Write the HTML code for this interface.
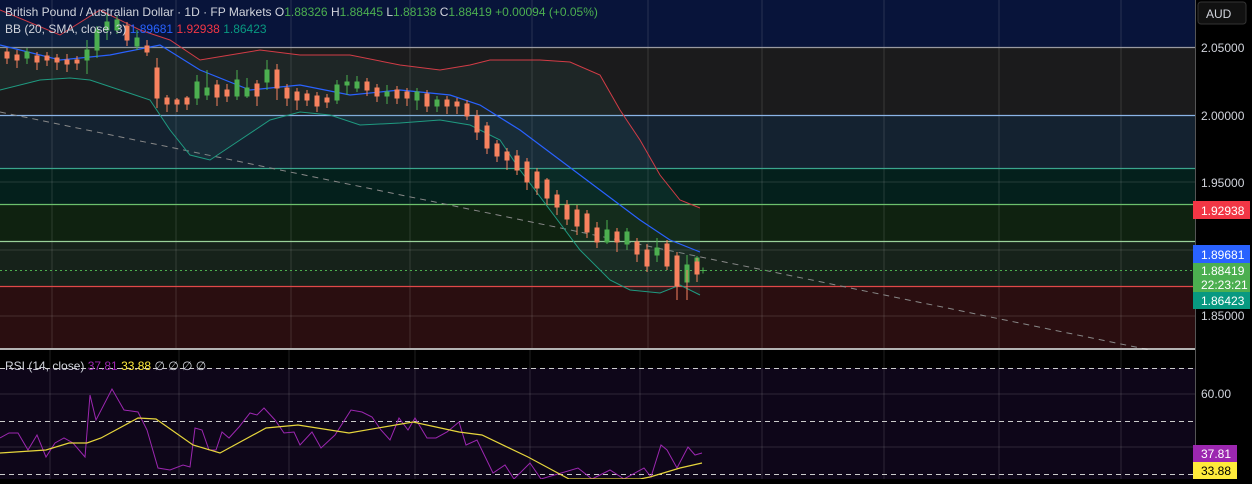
<!DOCTYPE html>
<html><head><meta charset="utf-8"><style>
body{margin:0;width:1252px;height:479px;overflow:hidden;background:#000;font-family:"Liberation Sans",sans-serif}
svg text{font-family:"Liberation Sans",sans-serif}
</style></head><body>
<svg width="1252" height="479" xmlns="http://www.w3.org/2000/svg">
<rect x="0" y="0" width="1195" height="47" fill="#08143a"/>
<rect x="0" y="47" width="1195" height="68" fill="#1b1b1c"/>
<rect x="0" y="115" width="1195" height="53" fill="#142230"/>
<rect x="0" y="168" width="1195" height="36" fill="#04201c"/>
<rect x="0" y="204" width="1195" height="37" fill="#0f2210"/>
<rect x="0" y="241" width="1195" height="45" fill="#16221a"/>
<rect x="0" y="286" width="1195" height="62" fill="#2a0e10"/>
<rect x="0" y="350" width="1195" height="18" fill="#000"/>
<rect x="0" y="368" width="1195" height="111" fill="#0e0619"/>
<g stroke="#ffffff" stroke-opacity="0.13" stroke-width="1">
<path d="M52 0V348M176 0V348M291 0V348M410 0V348M532 0V348M648 0V348M762 0V348M884 0V348M999 0V348M1121 0V348"/>
<path d="M50 350V479M179 350V479M289 350V479M415 350V479M530 350V479M640 350V479M762 350V479M884 350V479M999 350V479M1121 350V479"/>
<path d="M0 182H1195M0 250H1195M0 316H1195M0 394H1195M0 447H1195"/>
</g>
<g stroke-width="1.2">
<path d="M0 47.5H1195" stroke="#9a9aa0"/>
<path d="M0 115.5H1195" stroke="#8ab4e6"/>
<path d="M0 168.5H1195" stroke="#3aa58c"/>
<path d="M0 204.5H1195" stroke="#6cc06c"/>
<path d="M0 241.5H1195" stroke="#9ad29a"/>
<path d="M0 286.5H1195" stroke="#e04848"/>
</g>
<g stroke="#cccccc" stroke-dasharray="5,4" stroke-width="1">
<path d="M0 368.5H1195M0 421.5H1195M0 474.5H1195"/>
</g>
<path d="M0 112L1150 350" stroke="#888" stroke-dasharray="6,5" stroke-width="1"/>
<path d="M0 270.5H1195" stroke="#4caf50" stroke-dasharray="2,3"/>
<path d="M0 10L60 35L100 10L140 30L170 40L200 60L230 55L260 50L300 55L350 55L400 65L440 70L470 65L490 60L510 60L540 60L570 62L600 75L620 110L640 140L660 175L680 200L700 208L700 295L680 285L660 293L630 290L610 280L580 250L550 210L520 170L500 140L470 125L440 120L400 123L360 125L330 115L300 112L270 120L240 140L210 160L190 155L170 130L150 100L120 90L90 80L70 78L40 80L0 90Z" fill="#3a7a70" fill-opacity="0.12"/>
<path d="M0 10L60 35L100 10L140 30L170 40L200 60L230 55L260 50L300 55L350 55L400 65L440 70L470 65L490 60L510 60L540 60L570 62L600 75L620 110L640 140L660 175L680 200L700 208" fill="none" stroke="#d23c46" stroke-width="1"/>
<path d="M0 90L40 80L70 78L90 80L120 90L150 100L170 130L190 155L210 160L240 140L270 120L300 112L330 115L360 125L400 123L440 120L470 125L500 140L520 170L550 210L580 250L610 280L630 290L660 293L680 285L700 295" fill="none" stroke="#1f9a80" stroke-width="1"/>
<path d="M0 45L60 60L110 55L160 45L200 70L250 90L300 85L350 95L400 90L450 95L480 105L520 130L560 160L600 190L640 220L670 240L700 252" fill="none" stroke="#2962ff" stroke-width="1.2"/>
<g stroke-width="1">
<g fill="#4caf50" stroke="#4caf50">
<path d="M27 48V64M87 40V74M97 26V58M107 14V40M117 16V34M137 30V50M197 75V105M207 70V100M237 70V100M247 78V98M267 60V90M337 80V104M347 75V95M357 76V92M387 85V104M417 88V110M437 96V112M607 220V244M627 228V250M657 238V262M687 255V290M697 256V278"/>
<rect x="25" y="52" width="4" height="6"/><rect x="85" y="50" width="4" height="10"/><rect x="95" y="30" width="4" height="20"/><rect x="105" y="22" width="4" height="8"/><rect x="115" y="20" width="4" height="10"/><rect x="135" y="38" width="4" height="8"/><rect x="195" y="82" width="4" height="16"/><rect x="205" y="88" width="4" height="7"/><rect x="235" y="80" width="4" height="16"/><rect x="245" y="88" width="4" height="8"/><rect x="265" y="70" width="4" height="12"/><rect x="335" y="85" width="4" height="15"/><rect x="345" y="82" width="4" height="3"/><rect x="355" y="82" width="4" height="6"/><rect x="385" y="92" width="4" height="4"/><rect x="415" y="92" width="4" height="8"/><rect x="435" y="100" width="4" height="6"/><rect x="605" y="230" width="4" height="12"/><rect x="625" y="232" width="4" height="12"/><rect x="655" y="248" width="4" height="7"/><rect x="685" y="265" width="4" height="17"/><rect x="695" y="258" width="4" height="12"/>
</g>
<g fill="#f7825f" stroke="#f7825f">
<path d="M7 48V64M17 50V68M37 52V70M47 52V66M57 54V70M67 54V72M77 56V70M127 22V46M147 40V56M157 58V108M167 95V112M177 98V112M187 96V110M217 80V106M227 84V102M257 80V106M277 64V100M287 84V106M297 88V110M307 90V106M317 92V112M327 94V108M367 78V96M377 84V102M397 86V104M407 88V106M427 90V112M447 96V114M457 98V114M467 100V120M477 110V140M487 122V154M497 140V162M507 148V170M517 150V175M527 158V190M537 168V195M547 178V205M557 190V215M567 200V225M577 205V235M587 210V238M597 222V248M617 228V252M637 238V262M647 244V272M667 240V270M677 252V300M687 270V300M697 258V282"/>
<rect x="5" y="52" width="4" height="6"/><rect x="15" y="55" width="4" height="5"/><rect x="35" y="56" width="4" height="6"/><rect x="45" y="56" width="4" height="4"/><rect x="55" y="58" width="4" height="4"/><rect x="65" y="60" width="4" height="4"/><rect x="75" y="60" width="4" height="3"/><rect x="125" y="26" width="4" height="14"/><rect x="145" y="46" width="4" height="6"/><rect x="155" y="68" width="4" height="30"/><rect x="165" y="98" width="4" height="6"/><rect x="175" y="100" width="4" height="4"/><rect x="185" y="98" width="4" height="6"/><rect x="215" y="85" width="4" height="12"/><rect x="225" y="90" width="4" height="6"/><rect x="255" y="84" width="4" height="12"/><rect x="275" y="70" width="4" height="18"/><rect x="285" y="88" width="4" height="10"/><rect x="295" y="92" width="4" height="8"/><rect x="305" y="94" width="4" height="6"/><rect x="315" y="96" width="4" height="10"/><rect x="325" y="98" width="4" height="4"/><rect x="365" y="82" width="4" height="8"/><rect x="375" y="88" width="4" height="8"/><rect x="395" y="90" width="4" height="8"/><rect x="405" y="92" width="4" height="6"/><rect x="425" y="94" width="4" height="12"/><rect x="445" y="100" width="4" height="6"/><rect x="455" y="102" width="4" height="4"/><rect x="465" y="104" width="4" height="12"/><rect x="475" y="116" width="4" height="16"/><rect x="485" y="126" width="4" height="22"/><rect x="495" y="144" width="4" height="12"/><rect x="505" y="152" width="4" height="8"/><rect x="515" y="156" width="4" height="14"/><rect x="525" y="162" width="4" height="20"/><rect x="535" y="172" width="4" height="16"/><rect x="545" y="180" width="4" height="18"/><rect x="555" y="195" width="4" height="12"/><rect x="565" y="205" width="4" height="14"/><rect x="575" y="210" width="4" height="16"/><rect x="585" y="214" width="4" height="18"/><rect x="595" y="228" width="4" height="14"/><rect x="615" y="232" width="4" height="10"/><rect x="635" y="242" width="4" height="12"/><rect x="645" y="250" width="4" height="16"/><rect x="665" y="244" width="4" height="22"/><rect x="675" y="256" width="4" height="30"/><rect x="695" y="262" width="4" height="12"/>
</g>
<path d="M700 270.5H706M703 267.5V273.5" stroke="#4caf50"/>
</g>
<path d="M0 438L9 433L18 433L28 450L37 435L46 457L55 443L64 438L73 443L85 457L90 395L96 420L112 389L124 410L138 412L147 430L158 468L170 470L183 465L190 467L195 428L202 430L209 450L216 450L222 432L229 438L239 427L250 413L257 415L264 408L275 420L284 433L294 432L300 445L312 432L321 448L335 435L351 410L362 412L372 417L381 430L390 440L399 418L408 430L415 418L427 438L436 438L447 432L459 422L466 445L477 440L493 473L505 465L514 479L530 463L541 479L578 468L592 479L610 470L624 479L644 468L651 477L661 445L667 450L677 468L688 447L695 455L702 453" fill="none" stroke="#9c27b0" stroke-width="1"/>
<path d="M0 453L46 450L69 443L87 443L101 438L138 418L156 419L193 445L220 453L266 428L298 425L349 433L413 422L459 432L482 435L528 457L569 479L640 479L650 477L680 468L702 463" fill="none" stroke="#e6d53c" stroke-width="1.2"/>
<rect x="0" y="348" width="1252" height="2" fill="#e0e0e0" fill-opacity="0.8"/>
<rect x="1195" y="0" width="57" height="479" fill="#000"/>
<rect x="1195" y="0" width="1" height="479" fill="#555"/>
<rect x="1198" y="2" width="48" height="22" rx="3" fill="#111" stroke="#333"/>
<text x="1206" y="18" fill="#d1d4dc" font-size="12">AUD</text>
<g fill="#d1d4dc" font-size="12">
<text x="1201" y="52">2.05000</text>
<text x="1201" y="120">2.00000</text>
<text x="1201" y="187">1.95000</text>
<text x="1201" y="320">1.85000</text>
<text x="1201" y="398">60.00</text>
</g>
<rect x="1193" y="201" width="57" height="18" fill="#f23645"/>
<text x="1201" y="215" fill="#fff" font-size="12">1.92938</text>
<rect x="1193" y="245" width="57" height="18" fill="#2962ff"/>
<text x="1201" y="259" fill="#fff" font-size="12">1.89681</text>
<rect x="1193" y="263" width="57" height="29" fill="#4caf50"/>
<text x="1201" y="275" fill="#fff" font-size="12">1.88419</text>
<text x="1201" y="289" fill="#fff" font-size="12">22:23:21</text>
<rect x="1193" y="292" width="57" height="17" fill="#089981"/>
<text x="1201" y="305" fill="#fff" font-size="12">1.86423</text>
<rect x="1193" y="445" width="44" height="17" fill="#9c27b0"/>
<text x="1201" y="458" fill="#fff" font-size="12">37.81</text>
<rect x="1193" y="462" width="44" height="17" fill="#ffeb3b"/>
<text x="1201" y="475" fill="#000" font-size="12">33.88</text>
<text x="5" y="16" font-size="12" fill="#d1d4dc">British Pound / Australian Dollar · 1D · FP Markets  O<tspan fill="#4caf50">1.88326</tspan>  H<tspan fill="#4caf50">1.88445</tspan>  L<tspan fill="#4caf50">1.88138</tspan>  C<tspan fill="#4caf50">1.88419</tspan>  <tspan fill="#4caf50">+0.00094 (+0.05%)</tspan></text>
<text x="5" y="33" font-size="12" fill="#d1d4dc">BB (20, SMA, close, 3) <tspan fill="#2962ff">1.89681</tspan> <tspan fill="#f23645">1.92938</tspan> <tspan fill="#089981">1.86423</tspan></text>
<text x="5" y="370" font-size="12" fill="#d1d4dc">RSI (14, close) <tspan fill="#9c27b0">37.81</tspan> <tspan fill="#ffeb3b">33.88</tspan>  ∅  ∅  ∅  ∅</text>
</svg>
</body></html>
